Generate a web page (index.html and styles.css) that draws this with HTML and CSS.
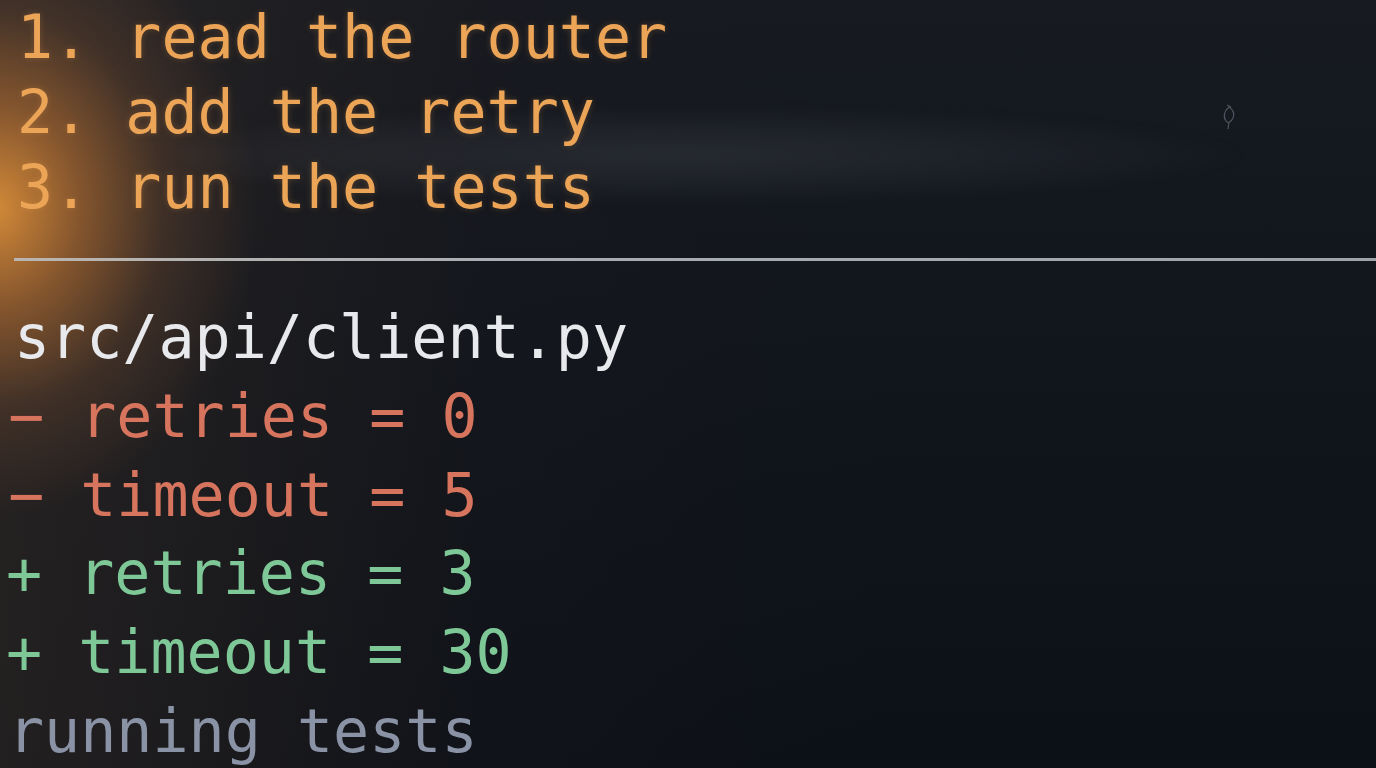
FILE: index.html
```html
<!DOCTYPE html>
<html lang="en">
<head>
<meta charset="utf-8">
<title>terminal</title>
<link rel="stylesheet" href="styles.css">
</head>
<body>
<main class="screen">
  <div class="glow"></div>
  <div class="streak"></div>
  <svg class="speck" width="18" height="30" viewBox="0 0 18 30" aria-hidden="true">
    <path d="M7 2 L11 4 M9 4 C4 8 3 14 6 18 C8 21 11 19 13 15 C15 10 12 6 9 4 M9 19 L8 26" fill="none" stroke="#5d636e" stroke-width="1.2"/>
  </svg>
  <ol class="plan">
    <li>1. read the router</li>
    <li>2. add the retry</li>
    <li>3. run the tests</li>
  </ol>
  <hr class="rule">
  <section class="diff">
    <div class="file">src/api/client.py</div>
    <div class="del">− retries = 0</div>
    <div class="del">− timeout = 5</div>
    <div class="add">+ retries = 3</div>
    <div class="add">+ timeout = 30</div>
    <div class="status">running tests</div>
  </section>
</main>
</body>
</html>
```

FILE: styles.css
```css
html, body {
  margin: 0;
  padding: 0;
  width: 1376px;
  height: 768px;
  overflow: hidden;
  background: #10141b;
}

.screen {
  position: relative;
  width: 1376px;
  height: 768px;
  overflow: hidden;
  box-sizing: border-box;
  padding-left: 12px;
  font-family: "DejaVu Sans Mono", "Liberation Mono", monospace;
  font-size: 60px;
  background:
    linear-gradient(90deg, rgba(50,42,38,0.6) 0%, rgba(28,27,30,0.25) 35%, rgba(0,0,0,0) 65%),
    linear-gradient(180deg, #171a21 0%, #11151c 45%, #0c1017 100%);
}

.plan li,
.diff div {
  white-space: pre;
}

.glow {
  position: absolute;
  left: -220px;
  top: -80px;
  width: 480px;
  height: 600px;
  border-radius: 50%;
  background: radial-gradient(ellipse at 45% 48%, rgba(240,155,60,0.85) 0%, rgba(215,130,55,0.55) 22%, rgba(150,95,55,0.25) 45%, rgba(0,0,0,0) 70%);
  pointer-events: none;
}

.streak {
  position: absolute;
  left: 180px;
  top: 105px;
  width: 1080px;
  height: 100px;
  border-radius: 50%;
  background: radial-gradient(ellipse at 45% 50%, rgba(170,175,185,0.12) 0%, rgba(150,155,165,0.06) 45%, rgba(0,0,0,0) 70%);
  filter: blur(6px);
  pointer-events: none;
}

.speck {
  position: absolute;
  left: 1220px;
  top: 103px;
  opacity: 0.8;
}

.plan {
  position: relative;
  list-style: none;
  margin: 0;
  padding: 0 0 0 5px;
  line-height: 75px;
  color: #eca457;
  text-shadow: 0 0 6px rgba(235,160,80,0.25);
}

.rule {
  position: relative;
  margin: 33px 0 37px 2px;
  height: 3px;
  border: 0;
  background: linear-gradient(90deg, #b9b5b0 0%, #a9adb3 40%, #9ea3aa 100%);
}

.diff {
  position: relative;
  line-height: 78.8px;
}

.file {
  color: #e8e9ec;
  padding-left: 2px;
}

.del {
  color: #d6745d;
  margin-left: -4px;
}

.add {
  color: #7ec797;
  margin-left: -6px;
}

.status {
  color: #8a93a6;
  margin-left: -4px;
}
```
